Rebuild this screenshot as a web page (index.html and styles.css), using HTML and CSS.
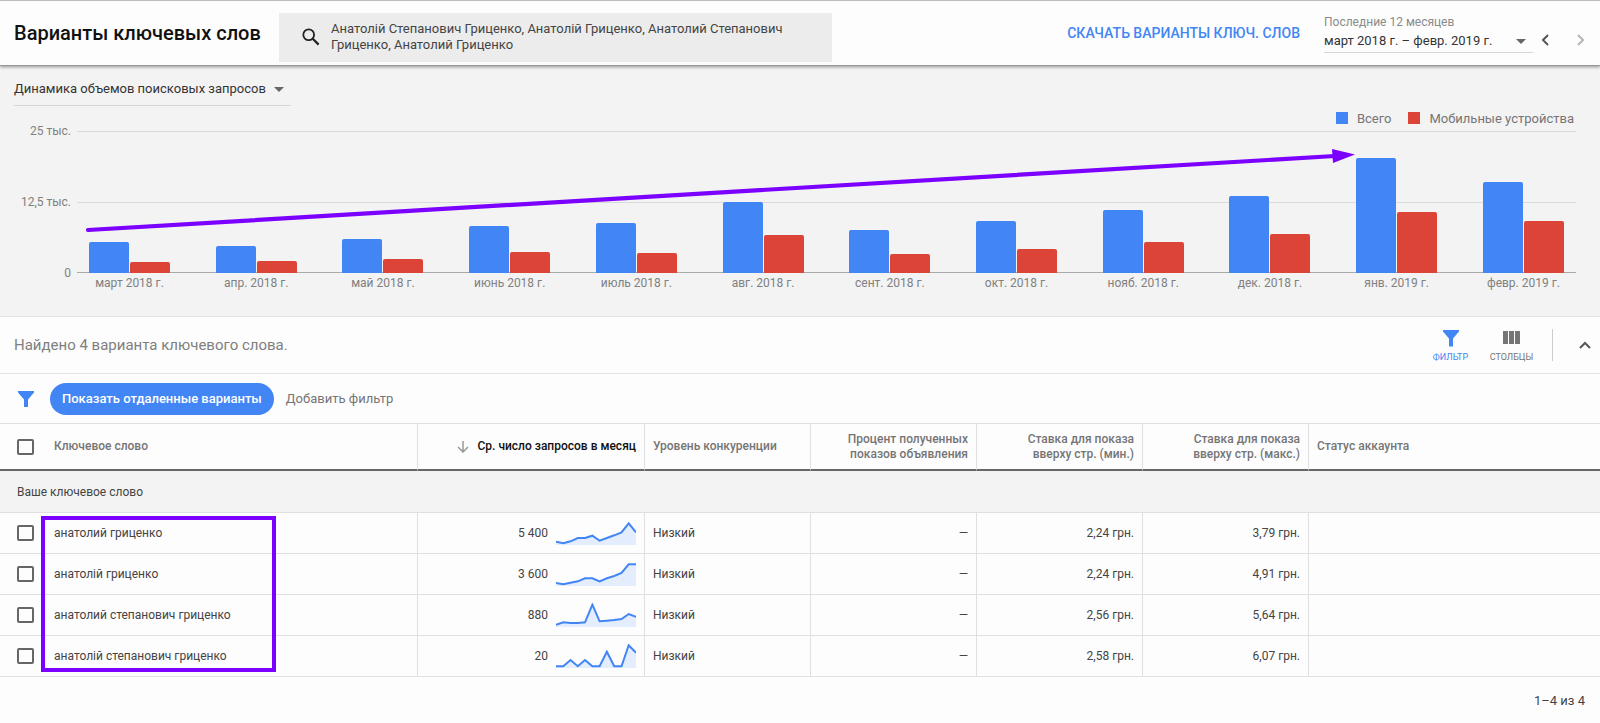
FILE: index.html
```html
<!DOCTYPE html>
<html lang="ru">
<head>
<meta charset="utf-8">
<title>Варианты ключевых слов</title>
<link rel="stylesheet" href="styles.css">
</head>
<body>
<header class="topbar">
  <h1 class="title">Варианты ключевых слов</h1>
  <label class="search">
    <svg class="search-icon" viewBox="0 0 18 18" aria-hidden="true"><circle cx="6.7" cy="6.7" r="5.4" fill="none" stroke="#222" stroke-width="1.8"/><path d="M10.8 10.8 16.6 16.6" stroke="#222" stroke-width="2.2"/></svg>
    <textarea class="search-text" rows="2" aria-label="Ключевые слова">Анатолій Степанович Гриценко, Анатолій Гриценко, Анатолий Степанович Гриценко, Анатолий Гриценко</textarea>
  </label>
  <a class="download" href="#download">СКАЧАТЬ ВАРИАНТЫ КЛЮЧ. СЛОВ</a>
  <div class="period">
    <label class="period-label" for="period">Последние 12 месяцев</label>
    <div class="select-wrap">
      <select class="select" id="period"><option>март 2018 г. – февр. 2019 г.</option></select>
      <svg class="caret" viewBox="0 0 10 5" aria-hidden="true"><path d="M0 0h10L5 5z"/></svg>
    </div>
  </div>
  <nav class="pager">
    <button class="icon-btn" aria-label="Предыдущий период"><svg class="chevron" viewBox="0 0 8 12"><path d="M7 1 2 6l5 5"/></svg></button>
    <button class="icon-btn" aria-label="Следующий период" disabled><svg class="chevron" viewBox="0 0 8 12"><path d="m1 1 5 5-5 5"/></svg></button>
  </nav>
</header>

<section class="trend">
  <div class="trend-head">
    <div class="select-wrap metric">
      <select class="select" aria-label="Показатель"><option>Динамика объемов поисковых запросов</option></select>
      <svg class="caret" viewBox="0 0 10 5" aria-hidden="true"><path d="M0 0h10L5 5z"/></svg>
    </div>
    <ul class="legend">
      <li class="key"><span class="swatch total"></span>Всего</li>
      <li class="key"><span class="swatch mobile"></span>Мобильные устройства</li>
    </ul>
  </div>
  <div class="chart">
    <div class="axis"><span>25 тыс.</span><span>12,5 тыс.</span><span>0</span></div>
    <div class="plot">
      <div class="month"><div class="bars"><i class="bar total" style="height:31px"></i><i class="bar mobile" style="height:11px"></i></div><span class="month-name">март 2018 г.</span></div>
      <div class="month"><div class="bars"><i class="bar total" style="height:27px"></i><i class="bar mobile" style="height:12px"></i></div><span class="month-name">апр. 2018 г.</span></div>
      <div class="month"><div class="bars"><i class="bar total" style="height:34px"></i><i class="bar mobile" style="height:14px"></i></div><span class="month-name">май 2018 г.</span></div>
      <div class="month"><div class="bars"><i class="bar total" style="height:47px"></i><i class="bar mobile" style="height:21px"></i></div><span class="month-name">июнь 2018 г.</span></div>
      <div class="month"><div class="bars"><i class="bar total" style="height:50px"></i><i class="bar mobile" style="height:20px"></i></div><span class="month-name">июль 2018 г.</span></div>
      <div class="month"><div class="bars"><i class="bar total" style="height:71px"></i><i class="bar mobile" style="height:38px"></i></div><span class="month-name">авг. 2018 г.</span></div>
      <div class="month"><div class="bars"><i class="bar total" style="height:43px"></i><i class="bar mobile" style="height:19px"></i></div><span class="month-name">сент. 2018 г.</span></div>
      <div class="month"><div class="bars"><i class="bar total" style="height:52px"></i><i class="bar mobile" style="height:24px"></i></div><span class="month-name">окт. 2018 г.</span></div>
      <div class="month"><div class="bars"><i class="bar total" style="height:63px"></i><i class="bar mobile" style="height:31px"></i></div><span class="month-name">нояб. 2018 г.</span></div>
      <div class="month"><div class="bars"><i class="bar total" style="height:77px"></i><i class="bar mobile" style="height:39px"></i></div><span class="month-name">дек. 2018 г.</span></div>
      <div class="month"><div class="bars"><i class="bar total" style="height:115px"></i><i class="bar mobile" style="height:61px"></i></div><span class="month-name">янв. 2019 г.</span></div>
      <div class="month"><div class="bars"><i class="bar total" style="height:91px"></i><i class="bar mobile" style="height:52px"></i></div><span class="month-name">февр. 2019 г.</span></div>
      <svg class="growth-arrow" viewBox="0 0 1499 142" preserveAspectRatio="none" aria-hidden="true"><path d="M11 99 1258 25" stroke="#7b00ff" stroke-width="4.2" stroke-linecap="round"/><path d="M1255 18 1278 23.500 1256 32z" fill="#7b00ff"/></svg>
    </div>
  </div>
</section>

<main>
  <div class="toolbar">
    <p class="found">Найдено 4 варианта ключевого слова.</p>
    <button class="tool active"><svg class="tool-icon" viewBox="0 0 18 18"><path d="M1 1h16v1.500L11 9.500v8H7v-8L1 2.500z"/></svg>ФИЛЬТР</button>
    <button class="tool"><svg class="tool-icon" viewBox="0 0 18 18"><path d="M0 2h5v13H0zM6 2h5v13H6zM12 2h5v13h-5z"/></svg>СТОЛБЦЫ</button>
    <span class="divider"></span>
    <button class="icon-btn" aria-label="Свернуть"><svg class="chevron-up" viewBox="0 0 12 8"><path d="m1 7 5-5 5 5"/></svg></button>
  </div>
  <div class="filters">
    <svg class="filter-icon" viewBox="0 0 18 18" aria-hidden="true"><path d="M1 1h16v1.500L11 9.500V17H7V9.500L1 2.500z"/></svg>
    <button class="chip">Показать отдаленные варианты</button>
    <button class="add-filter">Добавить фильтр</button>
  </div>

  <div class="table-wrap">
    <table class="keywords">
      <colgroup><col><col class="c-volume"><col class="c-std"><col class="c-std"><col class="c-std"><col class="c-std"><col class="c-status"></colgroup>
      <thead>
        <tr>
          <th><div class="name"><input class="check" type="checkbox" aria-label="Выбрать все">Ключевое слово</div></th>
          <th class="num sorted"><svg class="sort" viewBox="0 0 12 12" aria-hidden="true"><path d="M6 0v11M1 6l5 5 5-5"/></svg>Ср. число запросов в месяц</th>
          <th>Уровень конкуренции</th>
          <th class="num">Процент полученных<br>показов объявления</th>
          <th class="num">Ставка для показа<br>вверху стр. (мин.)</th>
          <th class="num">Ставка для показа<br>вверху стр. (макс.)</th>
          <th>Статус аккаунта</th>
        </tr>
      </thead>
      <tbody>
        <tr class="group"><td colspan="7">Ваше ключевое слово</td></tr>
        <tr>
          <td><label class="name"><input class="check" type="checkbox">анатолий гриценко</label></td>
          <td><div class="volume">5 400<svg class="spark" viewBox="0 0 80 24"><path class="area" d="M0 24V20.700L7.300 22.300 14.500 20.300 21.800 17H29L36.400 14.700 43.600 19.700 50.900 17 58.200 14.300 65.500 11.300 72.700 2.300 80 11.300V24z"/><path class="line" d="M0 20.700 7.300 22.300 14.500 20.300 21.800 17H29L36.400 14.700 43.600 19.700 50.900 17 58.200 14.300 65.500 11.300 72.700 2.300 80 11.300"/></svg></div></td>
          <td>Низкий</td><td class="num">—</td><td class="num">2,24 грн.</td><td class="num">3,79 грн.</td><td></td>
        </tr>
        <tr>
          <td><label class="name"><input class="check" type="checkbox">анатолій гриценко</label></td>
          <td><div class="volume">3 600<svg class="spark" viewBox="0 0 80 24"><path class="area" d="M0 24V21L7.300 22.300 14.500 20.700 21.800 19.300 29 16.300H36.400L43.600 19.300 50.900 16.300 58.200 14 65.500 11 72.700 2.300H80V24z"/><path class="line" d="M0 21 7.300 22.300 14.500 20.700 21.800 19.300 29 16.300H36.400L43.600 19.300 50.900 16.300 58.200 14 65.500 11 72.700 2.300H80"/></svg></div></td>
          <td>Низкий</td><td class="num">—</td><td class="num">2,24 грн.</td><td class="num">4,91 грн.</td><td></td>
        </tr>
        <tr>
          <td><label class="name"><input class="check" type="checkbox">анатолий степанович гриценко</label></td>
          <td><div class="volume">880<svg class="spark" viewBox="0 0 80 24"><path class="area" d="M0 24V21.700L7.300 19.300 14.500 20H21.800L29 19.300 36.400 1.700 43.600 18.300 50.900 17.700 58.200 17 65.500 16 72.700 11 80 13.700V24z"/><path class="line" d="M0 21.700 7.300 19.300 14.500 20H21.800L29 19.300 36.400 1.700 43.600 18.300 50.900 17.700 58.200 17 65.500 16 72.700 11 80 13.700"/></svg></div></td>
          <td>Низкий</td><td class="num">—</td><td class="num">2,56 грн.</td><td class="num">5,64 грн.</td><td></td>
        </tr>
        <tr>
          <td><label class="name"><input class="check" type="checkbox">анатолій степанович гриценко</label></td>
          <td><div class="volume">20<svg class="spark" viewBox="0 0 80 24"><path class="area" d="M0 24V22.300H7.300L14.500 16 21.800 22.300 29 16 36.400 22.300H43.600L50.900 7.700 58.200 22.300H65.500L72.700 1.300 80 8.700V24z"/><path class="line" d="M0 22.300H7.300L14.500 16 21.800 22.300 29 16 36.400 22.300H43.600L50.900 7.700 58.200 22.300H65.500L72.700 1.300 80 8.700"/></svg></div></td>
          <td>Низкий</td><td class="num">—</td><td class="num">2,58 грн.</td><td class="num">6,07 грн.</td><td></td>
        </tr>
      </tbody>
    </table>
    <span class="highlight" aria-hidden="true"></span>
  </div>
  <footer class="range">1–4 из 4</footer>
</main>
</body>
</html>
```
FILE: styles.css
```css
* { box-sizing: border-box; }
body {
  margin: 0;
  background: #fdfdfd;
  color: #444;
  font: 12px/16px Roboto, "Liberation Sans", sans-serif;
}
button, select, textarea { margin: 0; padding: 0; border: 0; background: none; font: inherit; color: inherit; }
svg { display: block; flex: none; }

.topbar {
  position: relative;
  display: flex;
  align-items: flex-start;
  height: 66px;
  padding: 12px 15px 0 14px;
  border-top: 1px solid #bdbdbd;
  border-bottom: 1px solid #999;
  box-shadow: 0 1px 3px rgba(0, 0, 0, .4);
}
.title { flex: none; width: 265px; margin: 0; font-size: 20px; font-weight: 500; line-height: 40px; color: #111; white-space: nowrap; }
.search { display: flex; flex: 0 1 553px; gap: 11px; height: 49px; padding: 8px 16px 0 23px; background: #ececec; }
.search-icon { width: 18px; height: 18px; margin-top: 7px; }
.search-text { flex: 1; height: 34px; resize: none; overflow: hidden; outline: 0; font-size: 13px; line-height: 16px; color: #444; }
.download { margin-left: auto; font-size: 14px; font-weight: 500; line-height: 40px; color: #4285f4; text-decoration: none; white-space: nowrap; }
.period { flex: none; width: 209px; margin-left: 24px; }
.period-label { display: block; margin-top: 1px; font-size: 12px; line-height: 16px; color: #8a8a8a; }
.select-wrap { position: relative; display: flex; align-items: center; border-bottom: 1px solid #d6d6d6; color: #333; }
.select { flex: 1; height: 22px; appearance: none; font-size: 13px; line-height: 22px; outline: 0; }
.caret { position: absolute; right: 7px; width: 10px; height: 5px; fill: #666; pointer-events: none; }
.pager { display: flex; gap: 28px; margin: 21px 0 0 8px; }
.icon-btn { flex: none; stroke: #555; cursor: pointer; }
.icon-btn:disabled { stroke: #b5b5b5; }
.chevron { width: 8px; height: 12px; fill: none; stroke-width: 2; }
.chevron-up { width: 12px; height: 8px; fill: none; stroke-width: 2; }

.trend { height: 251px; padding: 12px 24px 0 14px; background: #f3f3f3; border-bottom: 1px solid #e4e4e4; }
.trend-head { display: flex; justify-content: space-between; }
.metric { width: 277px; height: 28px; padding-bottom: 6px; }
.metric .caret { top: 9px; }
.legend { display: flex; gap: 17px; margin: 0; padding: 33px 2px 0 0; list-style: none; }
.key { display: flex; align-items: center; gap: 9px; font-size: 13px; line-height: 16px; color: #757575; }
.swatch { width: 12px; height: 12px; margin-bottom: 2px; }
.total { background: #4285f4; }
.mobile { background: #db4437; }
.chart { display: flex; margin-top: 4px; }
.axis { display: flex; flex: none; flex-direction: column; justify-content: space-between; width: 57px; height: 158px; margin-top: -8px; color: #808080; text-align: right; }
.plot {
  position: relative;
  flex: 1;
  display: flex;
  justify-content: space-between;
  height: 142px;
  margin-left: 6px;
  padding: 0 12px;
  background: linear-gradient(#dadada, #dadada) 0 0 / 100% 1px no-repeat, linear-gradient(#dadada, #dadada) 0 50% / 100% 1px no-repeat, linear-gradient(#aaa, #aaa) 0 100% / 100% 1px no-repeat;
}
.month { width: 81px; }
.bars { display: flex; align-items: flex-end; gap: 1px; height: 142px; }
.bar { flex: 1; border-radius: 2px 2px 0 0; }
.month-name { display: block; margin-top: 2px; text-align: center; color: #808080; white-space: nowrap; }
.growth-arrow { position: absolute; left: 0; top: 0; width: 100%; height: 142px; }

.toolbar { display: flex; align-items: center; height: 57px; padding: 0 9px 0 14px; border-bottom: 1px solid #e4e4e4; }
.found { flex: 1; margin: 0; font-size: 15px; line-height: 20px; color: #808080; }
.tool { display: flex; flex-direction: column; align-items: center; width: 61px; padding-top: 2px; font-size: 9px; line-height: 12px; gap: 4px; color: #757575; fill: #757575; cursor: pointer; }
.tool.active { color: #4285f4; fill: #4285f4; }
.tool-icon { width: 18px; height: 18px; }
.divider { width: 1px; height: 32px; margin: 0 26px 0 10px; background: #ccc; }
.filters { display: flex; align-items: center; height: 49px; padding: 0 17px; }
.filter-icon { width: 18px; height: 18px; fill: #4285f4; }
.chip { height: 32px; margin-left: 15px; padding: 0 12px; border-radius: 16px; background: #4285f4; color: #fff; font-size: 13px; font-weight: 500; }
.add-filter { margin-left: 12px; font-size: 13px; color: #757575; }

.table-wrap { position: relative; }
.keywords { width: 100%; table-layout: fixed; border-collapse: separate; border-spacing: 0; }
.c-volume { width: 227px; }
.c-std { width: 166px; }
.c-status { width: 291px; }
.keywords th { height: 48px; padding: 0 8px; border-top: 1px solid #e0e0e0; border-right: 1px solid #e0e0e0; border-bottom: 2px solid #666; font-weight: 500; line-height: 15px; text-align: left; color: #757575; white-space: nowrap; }
.keywords td { height: 41px; padding: 0 8px; border-right: 1px solid #e0e0e0; border-bottom: 1px solid #e0e0e0; }
.keywords th:last-child, .keywords td:last-child { border-right: 0; }
.keywords th:first-child, .keywords td:first-child { padding-left: 17px; }
.keywords .num { text-align: right; }
.keywords .sorted { color: #111; }
.sort { display: inline-block; width: 12px; height: 12px; margin-right: 8px; vertical-align: -3px; fill: none; stroke: #999; stroke-width: 1.5; }
.keywords .group td { height: 42px; background: #f3f3f3; }
.name { display: flex; align-items: center; gap: 20px; }
.check { appearance: none; flex: none; width: 17px; height: 16px; margin: 0; border: 2px solid #666; border-radius: 2px; }
.volume { display: flex; align-items: center; justify-content: flex-end; gap: 8px; }
.spark { width: 80px; height: 24px; }
.area { fill: #e3edfd; }
.line { fill: none; stroke: #4285f4; stroke-width: 2; }
.highlight { position: absolute; left: 41px; top: 93px; width: 235px; height: 156px; border: 4px solid #7b00ff; }
.range { padding: 16px 15px 14px; font-size: 13px; text-align: right; }
```
